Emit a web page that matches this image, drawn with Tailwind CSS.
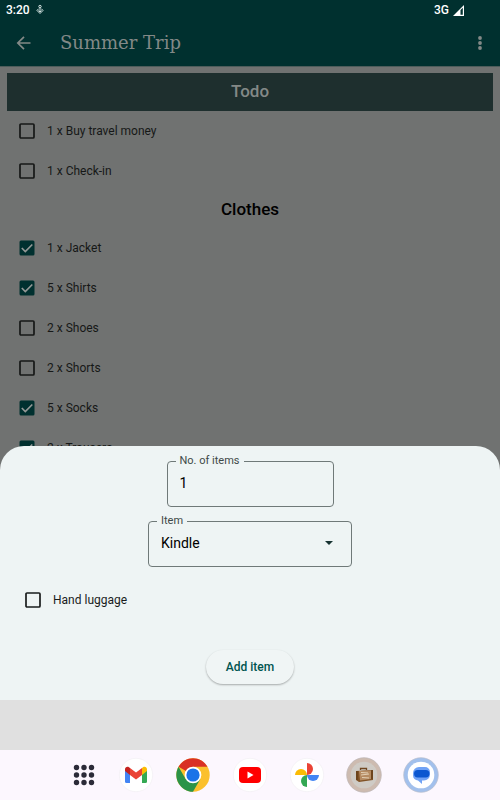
<!DOCTYPE html>
<html lang="en">
<head>
<meta charset="utf-8">
<meta name="viewport" content="width=device-width, initial-scale=1">
<title>Summer Trip</title>
<script src="https://cdn.jsdelivr.net/npm/@tailwindcss/browser@4"></script>
</head>
<body class="flex h-screen flex-col overflow-hidden bg-[#e0e0e0] font-[Roboto,sans-serif] text-black">

<!-- Trip list, dimmed behind the sheet -->
<div class="flex min-h-0 flex-1 flex-col overflow-hidden bg-[#707271]">
  <header class="shrink-0 border-b border-[#4d5c5b] bg-[#00302f]">
    <div class="flex h-5 items-center justify-between pr-9 pl-1.5 text-xs font-medium text-white">
      <div class="flex items-center gap-1.5">
        <span>3:20</span>
        <svg class="h-3 w-2" viewBox="0 0 8 12" fill="none" stroke="#d5e4e3" aria-hidden="true"><circle cx="4" cy="2.5" r="1.2"/><path d="M4 4v4M2.6 4.7 1 6.5l3 3 3-3-1.6-1.8M2.5 6.5 4 8l1.500-1.500"/></svg>
      </div>
      <div class="flex items-center gap-1">
        <span>3G</span>
        <svg class="h-[11px] w-[11px]" viewBox="0 0 11 11" aria-hidden="true"><path d="M0 11 11 0v11z" fill="#fff"/><path d="M7.500 5 9.800 2.700V9.800H7.500z" fill="#00302f"/></svg>
      </div>
    </div>
    <div class="flex h-[46px] items-center pr-4 pl-4">
      <button type="button" aria-label="Back" class="shrink-0"><svg class="block h-4 w-4" viewBox="0 0 16 16" fill="none" stroke="#838987" stroke-width="1.700"><path d="M14.500 8H2M8 1.800 1.800 8 8 14.200"/></svg></button>
      <h1 class="flex-1 pl-7 font-['DejaVu_Serif',serif] text-lg text-[#838987]">Summer Trip</h1>
      <button type="button" aria-label="More options" class="shrink-0"><svg class="block h-4 w-2" viewBox="0 0 8 16" fill="#838987"><circle cx="4" cy="3" r="1.900"/><circle cx="4" cy="8" r="1.900"/><circle cx="4" cy="13" r="1.900"/></svg></button>
    </div>
  </header>

  <main class="px-[7px] pt-1.5">
    <h2 class="flex h-[38px] items-center justify-center bg-[#1e2f2e] text-[17px] font-medium text-[#838987]">Todo</h2>
    <ul class="text-xs text-[#161817]">
      <li><label class="flex h-10 items-center gap-3 pl-3"><input type="checkbox" class="peer sr-only"><svg class="h-4 w-4" viewBox="0 0 16 16"><rect x="1" y="1" width="14" height="14" rx="1" fill="none" stroke="#161817" stroke-width="1.700"/></svg>1 x Buy travel money</label></li>
      <li><label class="flex h-10 items-center gap-3 pl-3"><input type="checkbox" class="peer sr-only"><svg class="h-4 w-4" viewBox="0 0 16 16"><rect x="1" y="1" width="14" height="14" rx="1" fill="none" stroke="#161817" stroke-width="1.700"/></svg>1 x Check-in</label></li>
    </ul>
    <h2 class="flex h-[37px] items-center justify-center text-[17px] font-medium">Clothes</h2>
    <ul class="text-xs text-[#161817]">
      <li><label class="flex h-10 items-center gap-3 pl-3"><input type="checkbox" checked class="peer sr-only"><svg class="h-4 w-4" viewBox="0 0 16 16"><rect x=".5" y=".5" width="15" height="15" rx="1.500" fill="#00302f"/><path d="m2.800 8 3.500 3.500 7-7" fill="none" stroke="#929896" stroke-width="1.700"/></svg>1 x Jacket</label></li>
      <li><label class="flex h-10 items-center gap-3 pl-3"><input type="checkbox" checked class="peer sr-only"><svg class="h-4 w-4" viewBox="0 0 16 16"><rect x=".5" y=".5" width="15" height="15" rx="1.500" fill="#00302f"/><path d="m2.800 8 3.500 3.500 7-7" fill="none" stroke="#929896" stroke-width="1.700"/></svg>5 x Shirts</label></li>
      <li><label class="flex h-10 items-center gap-3 pl-3"><input type="checkbox" class="peer sr-only"><svg class="h-4 w-4" viewBox="0 0 16 16"><rect x="1" y="1" width="14" height="14" rx="1" fill="none" stroke="#161817" stroke-width="1.700"/></svg>2 x Shoes</label></li>
      <li><label class="flex h-10 items-center gap-3 pl-3"><input type="checkbox" class="peer sr-only"><svg class="h-4 w-4" viewBox="0 0 16 16"><rect x="1" y="1" width="14" height="14" rx="1" fill="none" stroke="#161817" stroke-width="1.700"/></svg>2 x Shorts</label></li>
      <li><label class="flex h-10 items-center gap-3 pl-3"><input type="checkbox" checked class="peer sr-only"><svg class="h-4 w-4" viewBox="0 0 16 16"><rect x=".5" y=".5" width="15" height="15" rx="1.500" fill="#00302f"/><path d="m2.800 8 3.500 3.500 7-7" fill="none" stroke="#929896" stroke-width="1.700"/></svg>5 x Socks</label></li>
      <li><label class="flex h-10 items-center gap-3 pl-3"><input type="checkbox" checked class="peer sr-only"><svg class="h-4 w-4" viewBox="0 0 16 16"><rect x=".5" y=".5" width="15" height="15" rx="1.500" fill="#00302f"/><path d="m2.800 8 3.500 3.500 7-7" fill="none" stroke="#929896" stroke-width="1.700"/></svg>2 x Trousers</label></li>
    </ul>
  </main>
</div>

<!-- Add item sheet -->
<form class="relative -mt-6 flex shrink-0 flex-col items-center rounded-t-3xl bg-[#eef4f4] pt-[9px] pb-4">
  <fieldset class="h-[52px] w-[167px] rounded border border-[#6f7978] px-2">
    <legend class="px-1 text-[11px] leading-3 text-[#3f4948]"><label for="count">No. of items</label></legend>
    <input id="count" type="text" inputmode="numeric" value="1" class="block h-8 w-full px-1 text-sm outline-none">
  </fieldset>
  <fieldset class="mt-2 h-[52px] w-[204px] rounded border border-[#6f7978] px-2">
    <legend class="px-1 text-[11px] leading-3 text-[#3f4948]"><label for="item">Item</label></legend>
    <div class="flex h-8 items-center pr-2.5">
      <select id="item" class="h-8 flex-1 appearance-none px-1 text-sm outline-none"><option>Kindle</option></select>
      <svg class="h-1 w-2" viewBox="0 0 8 4" aria-hidden="true"><path d="M0 0h8L4 4z" fill="#173331"/></svg>
    </div>
  </fieldset>
  <label class="mt-[11px] flex h-11 items-center gap-3 self-start pl-[25px] text-xs text-[#191c1c]"><input type="checkbox" class="sr-only"><svg class="h-4 w-4" viewBox="0 0 16 16"><rect x="1" y="1" width="14" height="14" rx="1" fill="none" stroke="#191c1c" stroke-width="1.700"/></svg>Hand luggage</label>
  <button type="button" class="mt-7 h-[34px] rounded-full bg-[#f0f5f5] px-5 text-xs font-medium text-[#005450] shadow-[0_1px_2px_rgba(0,0,0,0.3)]">Add item</button>
</form>

<div class="h-[50px] shrink-0 bg-[#e0e0e0]"></div>

<!-- Taskbar -->
<nav class="flex h-[50px] shrink-0 items-center justify-center gap-[21px] bg-[#fcf7fe] pl-[10px]" aria-label="Taskbar">
  <button type="button" aria-label="All apps"><svg class="block h-[26px] w-[26px]" viewBox="5 5 26 26" fill="#2b2b38"><circle cx="10.500" cy="10.500" r="2.700"/><circle cx="18" cy="10.500" r="2.700"/><circle cx="25.500" cy="10.500" r="2.700"/><circle cx="10.500" cy="18" r="2.700"/><circle cx="18" cy="18" r="2.700"/><circle cx="25.500" cy="18" r="2.700"/><circle cx="10.500" cy="25.500" r="2.700"/><circle cx="18" cy="25.500" r="2.700"/><circle cx="25.500" cy="25.500" r="2.700"/></svg></button>
  <button type="button" aria-label="Gmail"><svg class="block h-9 w-9" viewBox="0 0 36 36"><circle cx="18" cy="18" r="16.700" fill="#fff" stroke="#f0edf2" stroke-width=".6"/><path d="M7 13v11.500q0 1.500 1.500 1.500H12V16z" fill="#4285f4"/><path d="M24 16v10h3.500q1.500 0 1.500-1.500V13z" fill="#34a853"/><path d="M12 11v7l6 4.500 6-4.500v-7l-6 4.500z" fill="#ea4335"/><path d="M7 12.500V14l5 4v-7l-1-.7c-1.800-1.300-4 0-4 2.200z" fill="#c5221f"/><path d="M29 12.500V14l-5 4v-7l1-.7c1.800-1.300 4 0 4 2.200z" fill="#fbbc04"/></svg></button>
  <button type="button" aria-label="Chrome"><svg class="block h-9 w-9" viewBox="0 0 36 36"><circle cx="18" cy="18" r="16.700" fill="#fbc02d"/><path d="M18 18 3.540 9.650A16.700 16.700 0 0 1 32.460 9.650H18z" fill="#d93025"/><path d="M3.540 9.650A16.700 16.700 0 0 0 18 34.700L25.230 22.170 18 18 10.770 22.170z" fill="#2b9348"/><circle cx="18" cy="18" r="8.350" fill="#fff"/><circle cx="18" cy="18" r="6.600" fill="#1a73e8"/></svg></button>
  <button type="button" aria-label="YouTube"><svg class="block h-9 w-9" viewBox="0 0 36 36"><circle cx="18" cy="18" r="16.700" fill="#fff" stroke="#f0edf2" stroke-width=".6"/><rect x="7" y="10" width="22" height="16" rx="4" fill="#f00"/><path d="m15.500 14.500 6 3.500-6 3.500z" fill="#fff"/></svg></button>
  <button type="button" aria-label="Photos"><svg class="block h-9 w-9" viewBox="0 0 36 36"><circle cx="18" cy="18" r="16.700" fill="#fff" stroke="#f0edf2" stroke-width=".6"/><path d="M18 6a6 6 0 0 1 0 12z" fill="#ea4335"/><path d="M30 18a6 6 0 0 1-12 0z" fill="#4285f4"/><path d="M18 30a6 6 0 0 1 0-12z" fill="#34a853"/><path d="M6 18a6 6 0 0 1 12 0z" fill="#fbbc04"/></svg></button>
  <button type="button" aria-label="Packing list"><svg class="block h-9 w-9" viewBox="0 0 36 36"><circle cx="18" cy="18" r="17.300" fill="#cdbbb0" stroke="#bcb4b4" stroke-width=".7"/><circle cx="18" cy="18" r="13.300" fill="#cfcbc5"/><path d="M14.500 13v-1.500h6V13" fill="none" stroke="#704721" stroke-width="1.300"/><path d="m10 14 17-1v10l-14 2-3-2z" fill="#805225"/><path d="m13 14 12-.4v8.500l-11 1.500z" fill="#b58b62"/><path d="m15 15.500 7 .500M15 18l8-1M16 20.500l7 .5" stroke="#e3d0b5" stroke-width="1"/><path d="M11 14v9M26 13v9" stroke="#5b3615"/></svg></button>
  <button type="button" aria-label="Messages"><svg class="block h-9 w-9" viewBox="0 0 36 36"><circle cx="18" cy="18" r="17.300" fill="#a2c0ec" stroke="#b7bdcb" stroke-width=".7"/><circle cx="18" cy="18" r="13.300" fill="#fff"/><path d="M16 10h6a5 5 0 0 1 5 5v2.500a6 6 0 0 1-6 6h-2V27l-4-3.500a5 5 0 0 1-5-5V16a6 6 0 0 1 6-6z" fill="#70a2f5"/><rect x="11" y="13" width="15.500" height="7.500" rx="3.700" fill="#0b57d0"/></svg></button>
</nav>
</body>
</html>
